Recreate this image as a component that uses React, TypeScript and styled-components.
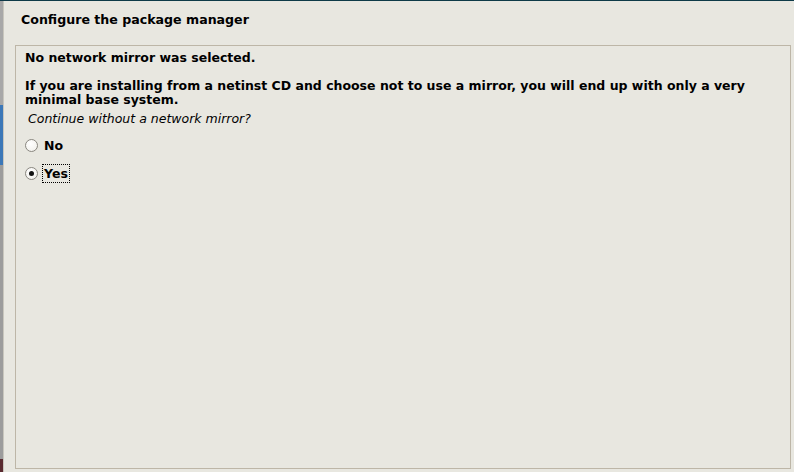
import styled, { createGlobalStyle } from 'styled-components'

const Global = createGlobalStyle`
  html, body {
    margin: 0;
    padding: 0;
    background: #e8e7e0;
  }
  #root {
    width: 794px;
    height: 472px;
    overflow: hidden;
  }
`

const Screen = styled.div`
  width: 794px;
  height: 472px;
  display: flex;
  flex-direction: column;
  font-family: 'DejaVu Sans', 'Liberation Sans', sans-serif;
  color: #000;
`

const TopEdge = styled.div`
  height: 1px;
  background: #0e3a48;
  flex-shrink: 0;
`

const Body = styled.div`
  flex: 1;
  display: flex;
  min-height: 0;
`

const DesktopStrip = styled.div`
  width: 3px;
  flex-shrink: 0;
  background: linear-gradient(
    to bottom,
    #a8a8a8 0px,
    #a8a8a8 104px,
    #3c78b8 104px,
    #3c78b8 164px,
    #9c9c9c 164px,
    #9c9c9c 458px,
    #5a2a30 458px
  );
  border-right: 1px solid #c8c6bd;
`

const Window = styled.div`
  flex: 1;
  display: flex;
  flex-direction: column;
  background: #e8e7e0;
  padding: 0 3px 3px 11px;
`

const Title = styled.h1`
  margin: 0;
  padding: 11px 0 0 6px;
  height: 44px;
  box-sizing: border-box;
  font-size: 12.6px;
  font-weight: bold;
  line-height: 15px;
`

const Frame = styled.div`
  flex: 1;
  border: 1px solid #bdb6a7;
  padding: 5px 9px;
  display: flex;
  flex-direction: column;
`

const Paragraph = styled.p<{ $gap?: number }>`
  margin: 0 0 ${p => p.$gap ?? 0}px 0;
  font-size: 12.5px;
  font-weight: bold;
  line-height: 14px;
`

const Question = styled.p`
  margin: 4px 0 0 3px;
  font-size: 12.5px;
  font-style: italic;
  line-height: 15px;
`

const Options = styled.div`
  display: flex;
  flex-direction: column;
  gap: 10px;
  margin-top: 10px;
`

const Option = styled.label`
  display: flex;
  align-items: center;
  gap: 5px;
  height: 18px;
`

const Radio = styled.span<{ $checked?: boolean }>`
  width: 11px;
  height: 11px;
  border-radius: 50%;
  border: 1px solid #8a8780;
  background: radial-gradient(circle at 40% 35%, #ffffff 0%, #f4f3ef 70%, #dcdad3 100%);
  display: flex;
  align-items: center;
  justify-content: center;

  &::after {
    content: '';
    width: 5px;
    height: 5px;
    border-radius: 50%;
    background: ${p => (p.$checked ? '#111' : 'transparent')};
  }
`

const OptionText = styled.span<{ $focused?: boolean }>`
  font-size: 12.5px;
  font-weight: bold;
  line-height: 15px;
  padding: 1px 1px;
  outline: ${p => (p.$focused ? '1px dotted #000' : 'none')};
  outline-offset: 0;
`

export default function App() {
  return (
    <>
      <Global />
      <Screen>
        <TopEdge />
        <Body>
          <DesktopStrip />
          <Window>
            <Title>Configure the package manager</Title>
            <Frame>
              <Paragraph $gap={14}>No network mirror was selected.</Paragraph>
              <Paragraph>
                If you are installing from a netinst CD and choose not to use a mirror, you will end up with only a very
                minimal base system.
              </Paragraph>
              <Question>Continue without a network mirror?</Question>
              <Options>
                <Option>
                  <Radio />
                  <OptionText>No</OptionText>
                </Option>
                <Option>
                  <Radio $checked />
                  <OptionText $focused>Yes</OptionText>
                </Option>
              </Options>
            </Frame>
          </Window>
        </Body>
      </Screen>
    </>
  )
}
